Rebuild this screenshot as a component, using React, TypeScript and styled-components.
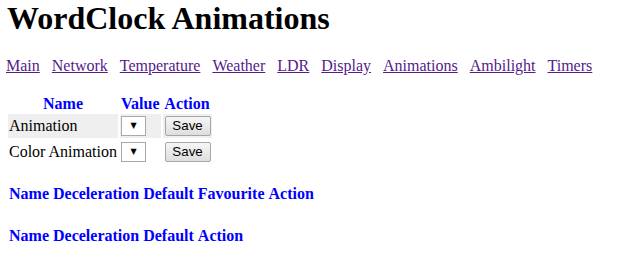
import React from "react";
import styled, { createGlobalStyle } from "styled-components";

const GlobalStyle = createGlobalStyle`
  html, body { background: #ffffff; }
  body {
    margin: 0 6px;
    font-family: "Liberation Serif", "Times New Roman", serif;
    font-size: 16px;
    color: #000000;
  }
`;

const Page = styled.div`
  display: flex;
  flex-direction: column;
  align-items: flex-start;
`;

const Title = styled.h1`
  margin: 0 0 21px 1px;
  font-size: 32px;
  line-height: 36px;
  font-weight: bold;
`;

const Nav = styled.nav`
  display: flex;
  gap: 12px;
  line-height: 18px;
`;

const NavLink = styled.a`
  color: #551a8b;
  text-decoration: underline;
  cursor: pointer;
`;

const Table = styled.table<{ $top: number }>`
  border-collapse: separate;
  border-spacing: 2px;
  margin-top: ${(p) => p.$top}px;
`;

const Th = styled.th`
  color: #0000ff;
  font-weight: bold;
  padding: 1px 1px 0;
  line-height: 17px;
  text-align: center;
`;

const Row = styled.tr<{ $shade?: boolean }>`
  background: ${(p) => (p.$shade ? "#efefef" : "transparent")};
`;

const Td = styled.td`
  padding: 1px;
  height: 22px;
  line-height: 18px;
  vertical-align: middle;
  white-space: nowrap;
`;

const SelectBox = styled.span`
  position: relative;
  display: inline-block;
  vertical-align: middle;
  width: 25px;
  height: 20px;
`;

const Select = styled.select`
  appearance: none;
  -webkit-appearance: none;
  box-sizing: border-box;
  display: block;
  width: 25px;
  height: 20px;
  margin: 0;
  padding: 0;
  border: 1px solid #a9a9a9;
  border-radius: 0;
  background: #ffffff;
  font-family: "Liberation Sans", Arial, sans-serif;
  font-size: 13px;
`;

const Arrow = styled.span`
  position: absolute;
  left: 0;
  top: 0;
  width: 25px;
  height: 20px;
  display: flex;
  align-items: center;
  justify-content: center;
  font-family: "DejaVu Sans", sans-serif;
  font-size: 8px;
  color: #000000;
  pointer-events: none;
`;

const SaveButton = styled.button`
  box-sizing: border-box;
  vertical-align: middle;
  width: 46px;
  height: 20px;
  margin: 0 0 0 1px;
  padding: 0 6px;
  border: 1px solid #a6a6a6;
  border-radius: 2px;
  background: linear-gradient(#f6f6f6, #dedede);
  font-family: "Liberation Sans", Arial, sans-serif;
  font-size: 13.33px;
  color: #000000;
  line-height: 16px;
`;

const links = [
  "Main",
  "Network",
  "Temperature",
  "Weather",
  "LDR",
  "Display",
  "Animations",
  "Ambilight",
  "Timers",
];

const rows = ["Animation", "Color Animation"];

export default function App() {
  return (
    <>
      <GlobalStyle />
      <Page>
        <Title>WordClock Animations</Title>
        <Nav>
          {links.map((l) => (
            <NavLink key={l} href="#">
              {l}
            </NavLink>
          ))}
        </Nav>
        <Table $top={17}>
          <thead>
            <tr>
              <Th>Name</Th>
              <Th>Value</Th>
              <Th>Action</Th>
            </tr>
          </thead>
          <tbody>
            {rows.map((r, i) => (
              <Row key={r} $shade={i === 0}>
                <Td>{r}</Td>
                <Td>
                  <SelectBox>
                    <Select />
                    <Arrow>▼</Arrow>
                  </SelectBox>
                </Td>
                <Td>
                  <SaveButton>Save</SaveButton>
                </Td>
              </Row>
            ))}
          </tbody>
        </Table>
        <Table $top={16}>
          <thead>
            <tr>
              <Th>Name</Th>
              <Th>Deceleration</Th>
              <Th>Default</Th>
              <Th>Favourite</Th>
              <Th>Action</Th>
            </tr>
          </thead>
        </Table>
        <Table $top={20}>
          <thead>
            <tr>
              <Th>Name</Th>
              <Th>Deceleration</Th>
              <Th>Default</Th>
              <Th>Action</Th>
            </tr>
          </thead>
        </Table>
      </Page>
    </>
  );
}
